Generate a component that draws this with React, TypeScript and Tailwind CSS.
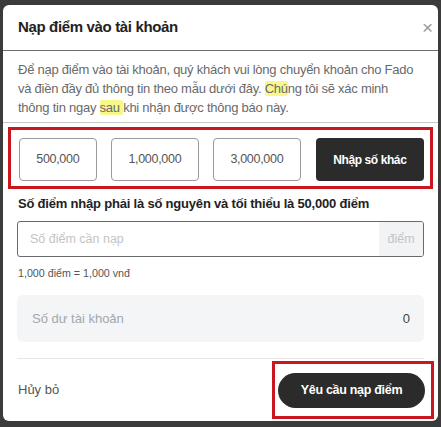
import React from "react";

export default function App() {
  const amounts = [
    { v: "500,000", w: "w-[78px]" },
    { v: "1,000,000", w: "w-[89px]" },
    { v: "3,000,000", w: "w-[88px]" },
  ];
  return (
    <div
      className="w-[441px] h-[427px] bg-[#3b3b3b] pt-[5px] px-[3px] overflow-hidden"
      style={{ fontFamily: '"Liberation Sans", Arial, sans-serif' }}
    >
      <div className="bg-white rounded-[6px] h-[416px] flex flex-col">
        {/* header */}
        <div className="h-[46px] flex items-center justify-between pl-[15px] pr-[5px] border-b border-[#6f6f6f]">
          <span className="text-[15px] tracking-[-0.35px] font-bold text-[#222]">Nạp điểm vào tài khoản</span>
          <span className="text-[19px] leading-none text-[#9a9a9a] font-light">×</span>
        </div>
        {/* description */}
        <div className="px-[15px] pt-[9px] pb-[5px] text-[13px] tracking-[-0.25px] leading-[19px] text-[#6a6a6a] border-b border-[#c8c8c8] whitespace-nowrap">
          Để nạp điểm vào tài khoản, quý khách vui lòng chuyển khoản cho Fado
          <br />
          và điền đầy đủ thông tin theo mẫu dưới đây.{" "}
          <span className="bg-[#f7f78a] rounded-[2px]">Chú</span>ng tôi sẽ xác minh
          <br />
          thông tin ngay <span className="bg-[#f7f78a] rounded-[2px]">sau </span>khi nhận được thông báo này.
        </div>
        {/* amount options */}
        <div className="mt-[4px] mx-[5px] border-[3px] border-[#c9161f] pt-[8px] pb-[5px] pl-[8px] pr-[6px] flex gap-[14px]">
          {amounts.map((a) => (
            <div
              key={a.v}
              className={`${a.w} h-[43px] border border-[#9a9a9a] rounded-[4px] flex items-center justify-center text-[12.5px] tracking-[-0.3px] text-[#555]`}
            >
              {a.v}
            </div>
          ))}
          <div className="w-[109px] h-[43px] bg-[#2b2b2b] rounded-[4px] flex items-center justify-center text-[12px] tracking-[-0.4px] font-bold text-white ml-[1px]">
            Nhập số khác
          </div>
        </div>
        {/* label */}
        <div className="mt-[7px] px-[15px] text-[13px] tracking-[-0.2px] font-bold text-[#222] leading-[16px]">
          Số điểm nhập phải là số nguyên và tối thiểu là 50,000 điểm
        </div>
        {/* input */}
        <div className="mt-[9px] mx-[14px] h-[36px] border border-[#6a6a6a] rounded-[3px] flex overflow-hidden">
          <div className="flex-1 flex items-center pl-[12px] text-[12.5px] text-[#c4c4c4]">Số điểm cần nạp</div>
          <div className="w-[44px] bg-[#f2f3f5] flex items-center justify-center text-[12.5px] text-[#c4c4c4]">điểm</div>
        </div>
        <div className="mt-[9px] px-[15px] text-[10.7px] text-[#555] leading-[14px]">1,000 điểm = 1,000 vnđ</div>
        {/* balance */}
        <div className="mt-[15px] mx-[14px] h-[47px] bg-[#f3f5f7] rounded-[6px] flex items-center justify-between pl-[15px] pr-[14px] text-[13px]">
          <span className="text-[#a3a8ae]">Số dư tài khoản</span>
          <span className="text-[#444]">0</span>
        </div>
        <div className="mt-[16px] mx-[14px] border-t border-[#e6e6e6]"></div>
        {/* footer */}
        <div className="flex items-center justify-between pl-[15px] pr-[4px] mt-[2px]">
          <span className="text-[13px] text-[#555]">Hủy bỏ</span>
          <div className="border-[3px] border-[#c9161f] w-[162px] h-[58px] flex items-center justify-end pr-[6px]">
            <div className="w-[147px] h-[35px] rounded-full bg-[#2b2b2b] flex items-center justify-center text-[12.5px] tracking-[-0.3px] font-bold text-white">
              Yêu cầu nạp điểm
            </div>
          </div>
        </div>
      </div>
    </div>
  );
}
